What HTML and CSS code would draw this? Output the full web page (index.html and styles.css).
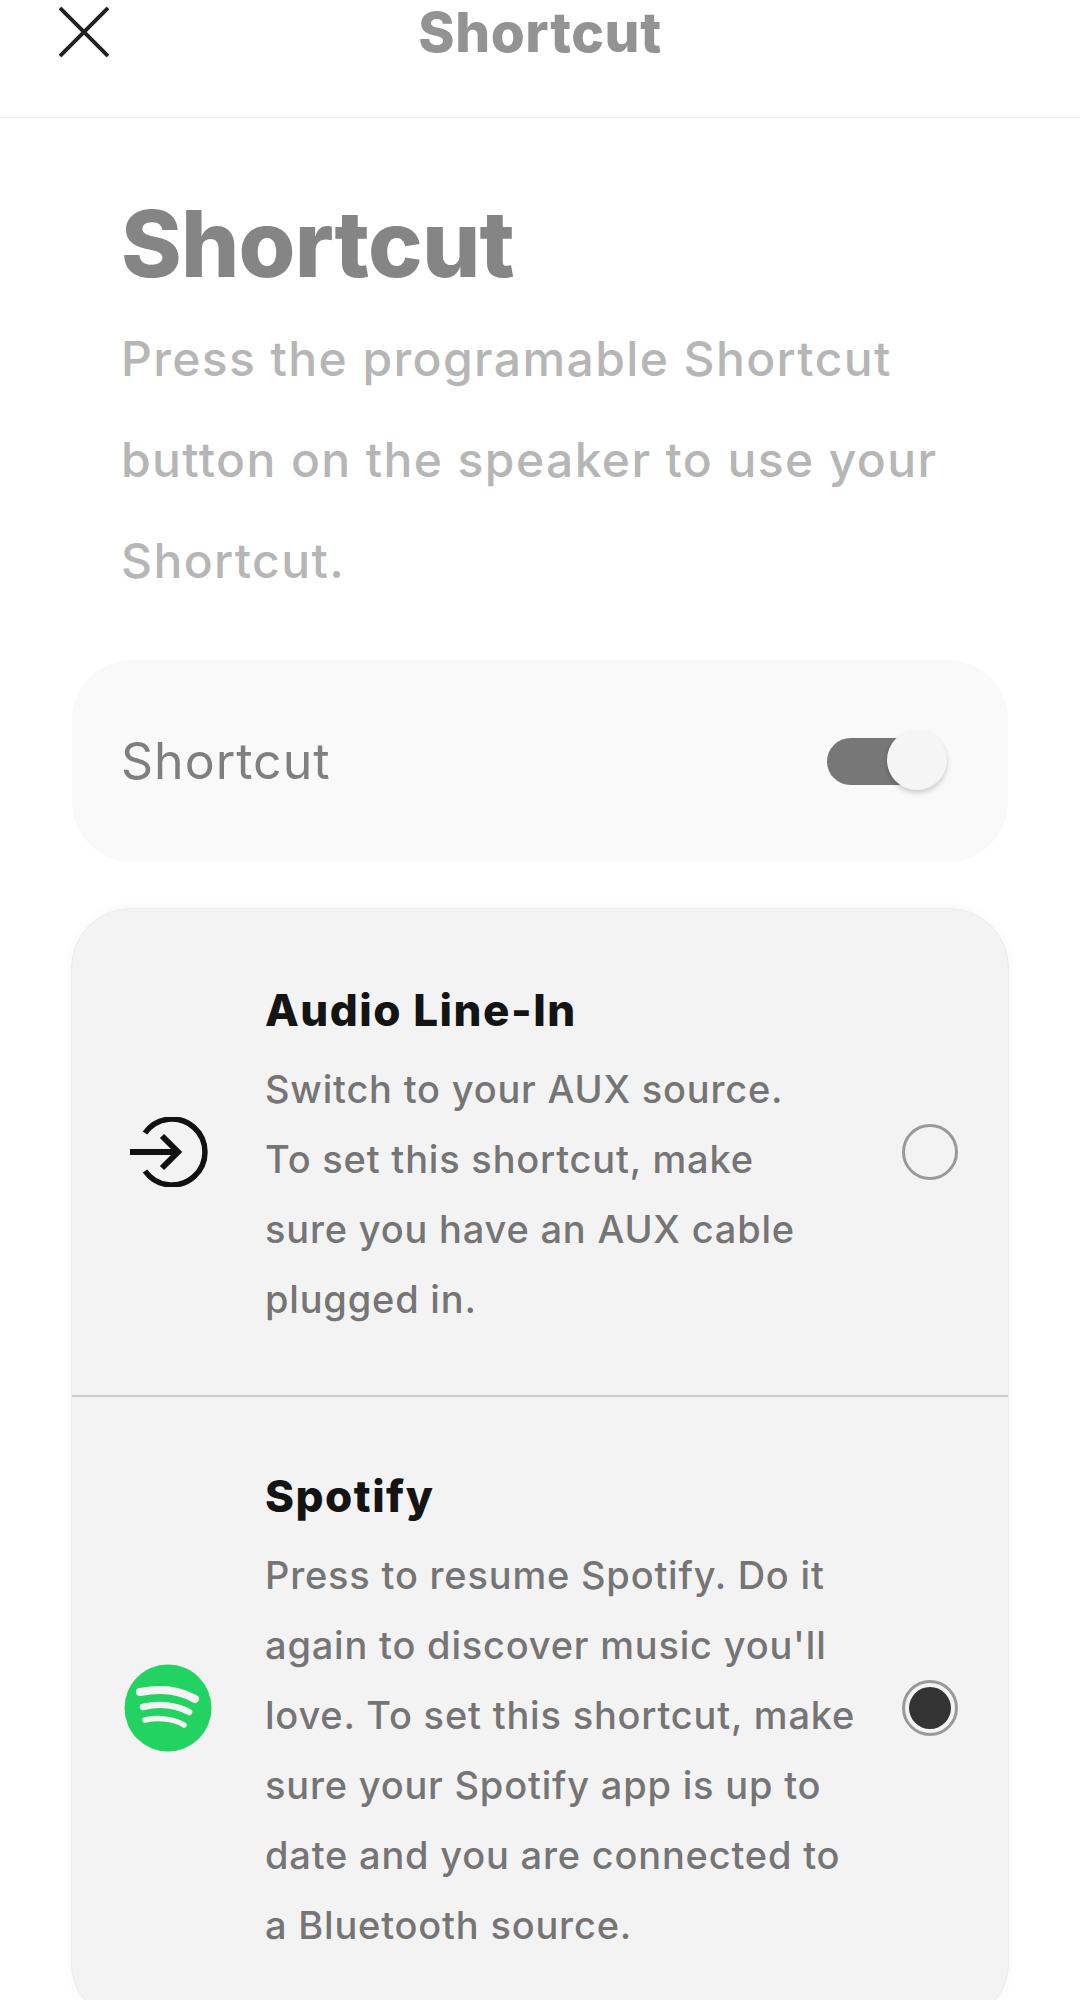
FILE: index.html
```html
<!DOCTYPE html>
<html>
<head>
    <title>Shortcut</title>
    <link rel="stylesheet" href="styles.css">
</head>
<body>
    <header class="topbar">
        <svg class="close-icon" viewBox="0 0 50 50" width="50" height="50">
            <path d="M1 1L49 49M49 1L1 49" fill="none" stroke="#222" stroke-width="4"/>
        </svg>
        <div class="topbar-title">Shortcut</div>
    </header>
    <main class="content">
        <div class="intro">
            <h1>Shortcut</h1>
            <p>Press the programable Shortcut<br>button on the speaker to use your<br>Shortcut.</p>
        </div>
        <div class="toggle-card">
            <span class="toggle-label">Shortcut</span>
            <div class="toggle">
                <div class="toggle-knob"></div>
            </div>
        </div>
        <div class="options">
            <div class="option option-audio">
                <div class="option-icon">
                    <svg viewBox="0 0 80 70" width="80" height="70">
                        <path d="M17 16A33 33 0 1 1 17 54" fill="none" stroke="#111" stroke-width="5.5"/>
                        <path d="M2 35H50M34 19L50 35L34 51" fill="none" stroke="#111" stroke-width="6"/>
                    </svg>
                </div>
                <div class="option-text">
                    <h2>Audio Line-In</h2>
                    <p>Switch to your AUX source.<br>To set this shortcut, make<br>sure you have an AUX cable<br>plugged in.</p>
                </div>
                <div class="radio"></div>
            </div>
            <div class="option option-spotify">
                <div class="option-icon">
                    <svg viewBox="0 0 88 88" width="88" height="88">
                        <circle cx="44" cy="44" r="43.5" fill="#22d362"/>
                        <path d="M16 28C36 24 56 26 71 35" fill="none" stroke="#f4f4f4" stroke-width="8" stroke-linecap="round"/>
                        <path d="M19 43C35 39 52 41 65 48" fill="none" stroke="#f4f4f4" stroke-width="6.5" stroke-linecap="round"/>
                        <path d="M21 56C35 53 50 55 60 61" fill="none" stroke="#f4f4f4" stroke-width="5.5" stroke-linecap="round"/>
                    </svg>
                </div>
                <div class="option-text">
                    <h2>Spotify</h2>
                    <p>Press to resume Spotify. Do it<br>again to discover music you'll<br>love. To set this shortcut, make<br>sure your Spotify app is up to<br>date and you are connected to<br>a Bluetooth source.</p>
                </div>
                <div class="radio radio-on"></div>
            </div>
        </div>
    </main>
</body>
</html>
```

FILE: styles.css
```css
html, body {
    margin: 0;
    height: 2000px;
    overflow: hidden;
    background-color: #fff;
    font-family: Inter, "Noto Sans", sans-serif;
}

.topbar {
    position: relative;
    height: 117px;
    border-bottom: 1px solid #f0f0f0;
    display: flex;
    justify-content: center;
}
.close-icon {
    position: absolute;
    left: 59px;
    top: 7px;
}
.topbar-title {
    font-size: 55px;
    font-weight: 800;
    line-height: 64px;
    letter-spacing: 0.6px;
    color: #939393;
}

.content {
    padding: 0 72px;
}
.intro {
    padding: 76px 0 49px 49px;
}
.intro h1 {
    margin: 0 0 14px;
    font-size: 92px;
    font-weight: 800;
    line-height: 100px;
    letter-spacing: -0.8px;
    color: #858585;
}
.intro p {
    margin: 0;
    font-size: 48px;
    font-weight: 500;
    line-height: 101px;
    letter-spacing: 1.4px;
    color: #b6b6b6;
}

.toggle-card {
    height: 202px;
    box-sizing: border-box;
    padding: 0 79px 0 49px;
    border-radius: 60px;
    background-color: #f9f9f9;
    display: flex;
    align-items: center;
    justify-content: space-between;
}
.toggle-label {
    font-size: 50px;
    font-weight: 400;
    letter-spacing: 1px;
    color: #7f7f7f;
}
.toggle {
    position: relative;
    width: 102px;
    height: 47px;
    border-radius: 24px;
    background-color: #777;
}
.toggle-knob {
    position: absolute;
    right: -18px;
    top: -8px;
    width: 60px;
    height: 60px;
    border-radius: 50%;
    background-color: #f5f5f5;
    box-shadow: 0 3px 5px rgba(0, 0, 0, 0.18);
}

.options {
    margin: 46px -1px 0;
    height: 1113px;
    border: 1px solid #ececec;
    border-radius: 60px;
    background-color: #f3f3f4;
    box-shadow: 0 0 12px rgba(0, 0, 0, 0.04);
}
.option {
    display: flex;
    align-items: center;
    box-sizing: border-box;
    padding: 0 50px 0 0;
}
.option-audio {
    height: 488px;
    border-bottom: 2px solid #c9c9c9;
}
.option-spotify {
    height: 622px;
}
.option-icon {
    width: 191px;
    margin-right: 2px;
    flex-shrink: 0;
    display: flex;
    justify-content: center;
}
.option-text {
    flex: 1;
    padding-top: 8px;
}
.option-text h2 {
    margin: 0 0 13px;
    font-size: 44px;
    font-weight: 800;
    line-height: 62px;
    letter-spacing: 1.5px;
    color: #141414;
}
.option-text p {
    margin: 0;
    font-size: 38px;
    font-weight: 500;
    line-height: 70px;
    letter-spacing: 0.8px;
    color: #757575;
}
.radio {
    box-sizing: border-box;
    width: 56px;
    height: 56px;
    flex-shrink: 0;
    border: 3px solid #999;
    border-radius: 50%;
}
.radio-on {
    padding: 4px;
    background-color: #333;
    background-clip: content-box;
}
```
